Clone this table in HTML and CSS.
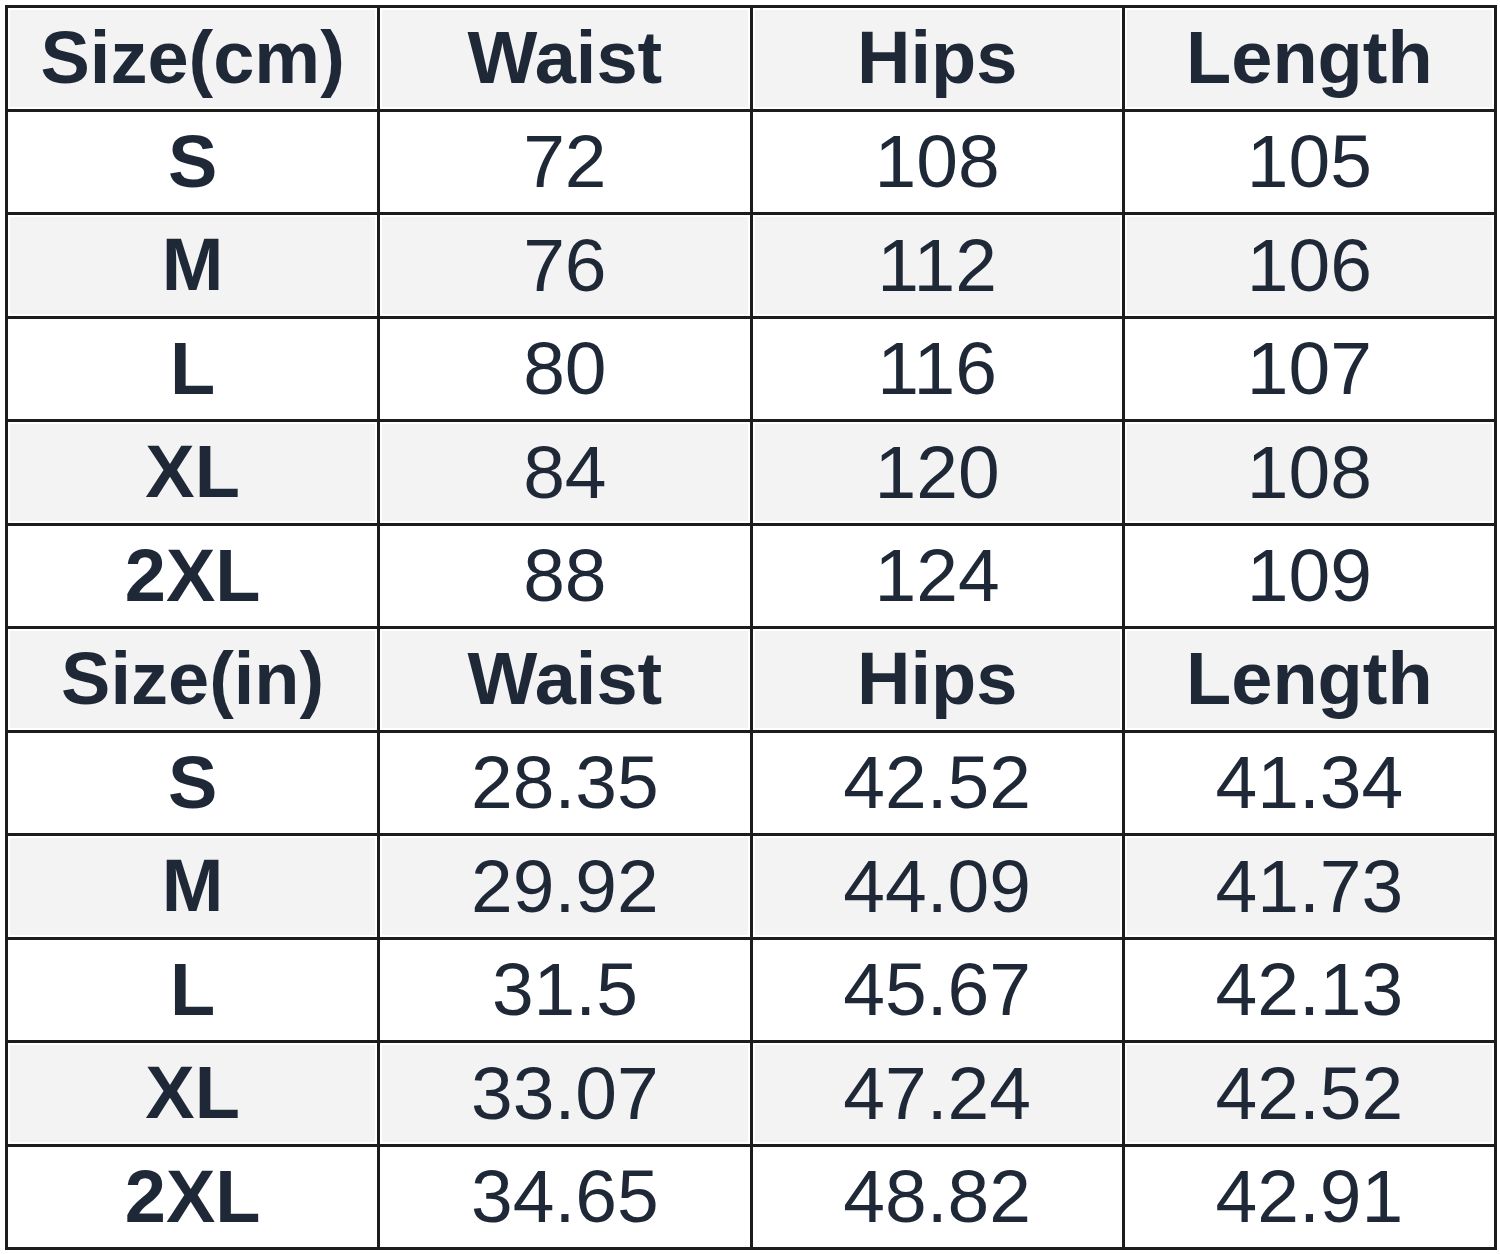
FILE: index.html
```html
<!DOCTYPE html>
<html>
<head>
<meta charset="utf-8">
<link rel="stylesheet" href="styles.css">
</head>
<body>
<div class="chart">
  <div class="cell head shade">Size(cm)</div><div class="cell head shade">Waist</div><div class="cell head shade">Hips</div><div class="cell head shade">Length</div>
  <div class="cell head">S</div><div class="cell">72</div><div class="cell">108</div><div class="cell">105</div>
  <div class="cell head shade">M</div><div class="cell shade">76</div><div class="cell shade">112</div><div class="cell shade">106</div>
  <div class="cell head">L</div><div class="cell">80</div><div class="cell">116</div><div class="cell">107</div>
  <div class="cell head shade">XL</div><div class="cell shade">84</div><div class="cell shade">120</div><div class="cell shade">108</div>
  <div class="cell head">2XL</div><div class="cell">88</div><div class="cell">124</div><div class="cell">109</div>
  <div class="cell head shade">Size(in)</div><div class="cell head shade">Waist</div><div class="cell head shade">Hips</div><div class="cell head shade">Length</div>
  <div class="cell head">S</div><div class="cell">28.35</div><div class="cell">42.52</div><div class="cell">41.34</div>
  <div class="cell head shade">M</div><div class="cell shade">29.92</div><div class="cell shade">44.09</div><div class="cell shade">41.73</div>
  <div class="cell head">L</div><div class="cell">31.5</div><div class="cell">45.67</div><div class="cell">42.13</div>
  <div class="cell head shade">XL</div><div class="cell shade">33.07</div><div class="cell shade">47.24</div><div class="cell shade">42.52</div>
  <div class="cell head">2XL</div><div class="cell">34.65</div><div class="cell">48.82</div><div class="cell">42.91</div>
</div>
</body>
</html>
```
FILE: styles.css
```css
html, body {
  margin: 0;
  padding: 0;
  background: #ffffff;
}
body {
  padding: 5px 0 0 5px;
}
.chart {
  width: 1492px;
  height: 1245px;
  box-sizing: border-box;
  display: grid;
  grid-template-columns: repeat(4, 1fr);
  grid-template-rows: repeat(12, 1fr);
  gap: 3px;
  padding: 3px;
  background: #1c1c1c;
}
.cell {
  background: #ffffff;
  display: flex;
  align-items: center;
  justify-content: center;
  font-family: "Liberation Sans", Arial, sans-serif;
  font-size: 75px;
  color: #1f2837;
  line-height: 1;
}
.head {
  font-weight: bold;
  font-size: 74px;
}
.shade {
  background: #f3f3f3;
  box-shadow: inset 0 0 0 2px #ffffff;
}
```
